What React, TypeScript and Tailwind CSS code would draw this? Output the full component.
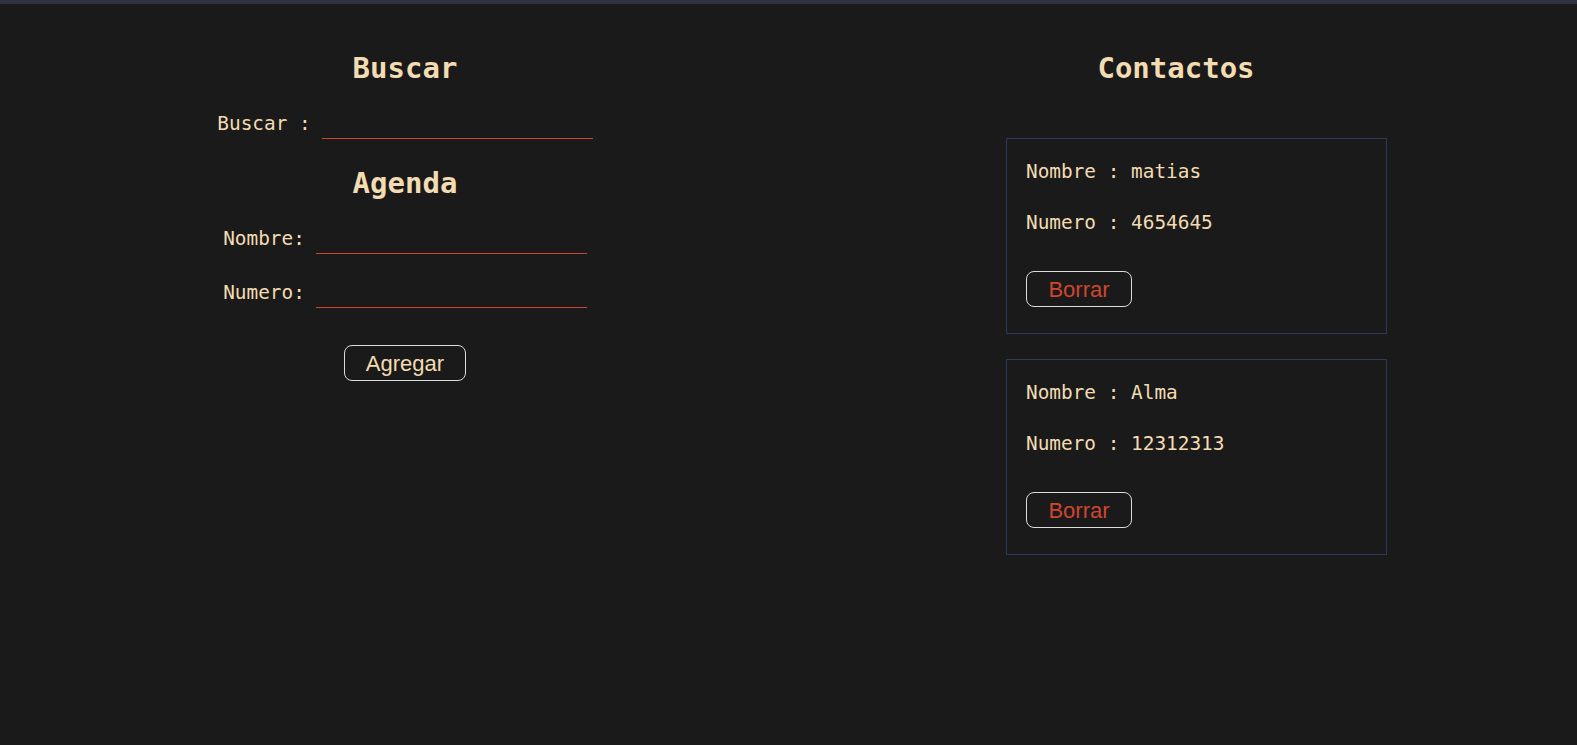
import React from "react";

const mono = { fontFamily: '"DejaVu Sans Mono", "Liberation Mono", monospace' };
const sans = { fontFamily: '"Liberation Sans", Arial, sans-serif' };

function Row({ label, top }: { label: string; top: number }) {
  return (
    <div className="flex items-center justify-center gap-[11px]" style={{ marginTop: top }}>
      <label className="text-[19.4px] leading-[24px] text-[#f3dcb2]">{label}</label>
      <input className="h-[30px] w-[271px] border-b border-[#c9472c] bg-transparent outline-none text-[#f3dcb2]" />
    </div>
  );
}

function Card({ name, num }: { name: string; num: string }) {
  return (
    <div className="w-[381px] border border-[#2c3b5a] px-[19px] pt-[21px] pb-[26px]">
      <p className="text-[19.4px] leading-[24px] text-[#f3dcb2]">Nombre : {name}</p>
      <p className="mt-[27px] text-[19.4px] leading-[24px] text-[#f3dcb2]">Numero : {num}</p>
      <button
        className="mt-[36px] flex h-[36px] w-[106px] items-center justify-center rounded-[8px] border border-[#dcdcdc] text-[22px] text-[#d0452f]"
        style={sans}
      >
        Borrar
      </button>
    </div>
  );
}

export default function App() {
  return (
    <div className="min-h-[745px] w-full bg-[#1a1a1a]" style={mono}>
      <div className="h-[4px] bg-[#2e3242]" />
      <div className="flex pt-[47px]">
        <div className="flex w-[810px] flex-col">
          <h2 className="text-center text-[29px] font-bold leading-[34px] text-[#f3dcb2]">Buscar</h2>
          <Row label="Buscar :" top={24} />
          <h2 className="mt-[27px] text-center text-[29px] font-bold leading-[34px] text-[#f3dcb2]">Agenda</h2>
          <Row label="Nombre:" top={24} />
          <Row label="Numero:" top={24} />
          <div className="mt-[37px] flex justify-center">
            <button
              className="flex h-[36px] w-[122px] items-center justify-center rounded-[8px] border border-[#dcdcdc] text-[22px] text-[#f3dcb2]"
              style={sans}
            >
              Agregar
            </button>
          </div>
        </div>
        <div className="flex flex-1 flex-col items-center pl-[6px]">
          <h2 className="mr-[41px] text-center text-[29px] font-bold leading-[34px] text-[#f3dcb2]">Contactos</h2>
          <div className="mt-[53px] flex flex-col gap-[25px]">
            <Card name="matias" num="4654645" />
            <Card name="Alma" num="12312313" />
          </div>
        </div>
      </div>
    </div>
  );
}
